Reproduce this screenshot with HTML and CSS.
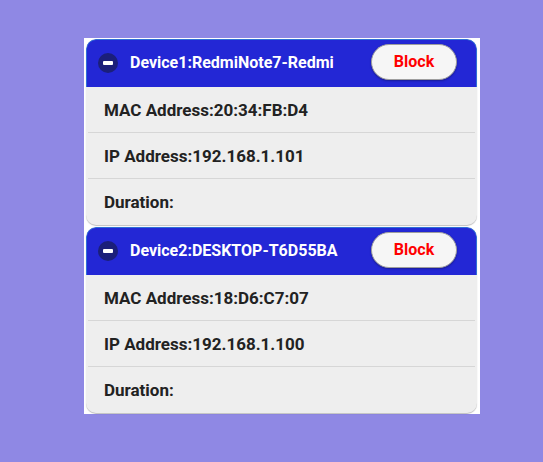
FILE: index.html
```html
<!DOCTYPE html>
<html lang="en">
<head>
    <meta charset="UTF-8">
    <meta name="viewport" content="width=device-width, initial-scale=1.0">
    <title>Connected Devices</title>
    <link rel="stylesheet" href="styles.css">
</head>
<body>
    <div class="panel">
        <div class="device-card">
            <div class="device-header">
                <span class="collapse-icon"></span>
                <span class="device-name">Device1:RedmiNote7-Redmi</span>
                <button class="block-btn">Block</button>
            </div>
            <div class="device-row">MAC Address:20:34:FB:D4</div>
            <div class="device-row">IP Address:192.168.1.101</div>
            <div class="device-row">Duration:</div>
        </div>

        <div class="device-card">
            <div class="device-header">
                <span class="collapse-icon"></span>
                <span class="device-name">Device2:DESKTOP-T6D55BA</span>
                <button class="block-btn">Block</button>
            </div>
            <div class="device-row">MAC Address:18:D6:C7:07</div>
            <div class="device-row">IP Address:192.168.1.100</div>
            <div class="device-row">Duration:</div>
        </div>
    </div>
</body>
</html>
```

FILE: styles.css
```css
* {
    margin: 0;
    padding: 0;
    box-sizing: border-box;
}

body {
    font-family: Roboto, "Noto Sans", sans-serif;
    background: #8f88e4;
    height: 100vh;
    overflow: hidden;
    padding: 38px 0 0 84px;
}

.panel {
    width: 396px;
    background: white;
    padding: 1px 3px 1px 2px;
    display: flex;
    flex-direction: column;
    gap: 2px;
}

.device-card {
    background: #eeeeee;
    border-radius: 10px;
    box-shadow: 0 1px 1px rgba(0, 0, 0, 0.25);
    overflow: hidden;
}

.device-header {
    height: 48px;
    background: #2327d5;
    border: 1px solid #2f6fd6;
    border-bottom: none;
    border-radius: 10px 10px 0 0;
    display: flex;
    align-items: center;
    padding: 0 19px 2px 11px;
    color: white;
}

.collapse-icon {
    width: 20px;
    height: 20px;
    border-radius: 50%;
    background: #1b1f7a;
    position: relative;
    flex-shrink: 0;
}

.collapse-icon::after {
    content: "";
    position: absolute;
    left: 5px;
    top: 8px;
    width: 10px;
    height: 4px;
    border-radius: 1px;
    background: white;
}

.device-name {
    flex: 1;
    margin-left: 12px;
    font-size: 16px;
    font-weight: bold;
}

.block-btn {
    width: 86px;
    height: 36px;
    margin-bottom: 2px;
    border-radius: 18px;
    background: #f6f6f6;
    border: 1px solid #9e9e9e;
    box-shadow: 0 1px 2px rgba(0, 0, 0, 0.3);
    color: #ff0000;
    font-family: Roboto, "Noto Sans", sans-serif;
    font-size: 16px;
    font-weight: bold;
}

.device-row {
    height: 46px;
    display: flex;
    align-items: center;
    padding-left: 16px;
    margin: 0 2px;
    font-size: 17px;
    font-weight: bold;
    color: #222222;
    border-bottom: 1px solid #d6d6d6;
}

.device-row:last-child {
    border-bottom: none;
}
```
